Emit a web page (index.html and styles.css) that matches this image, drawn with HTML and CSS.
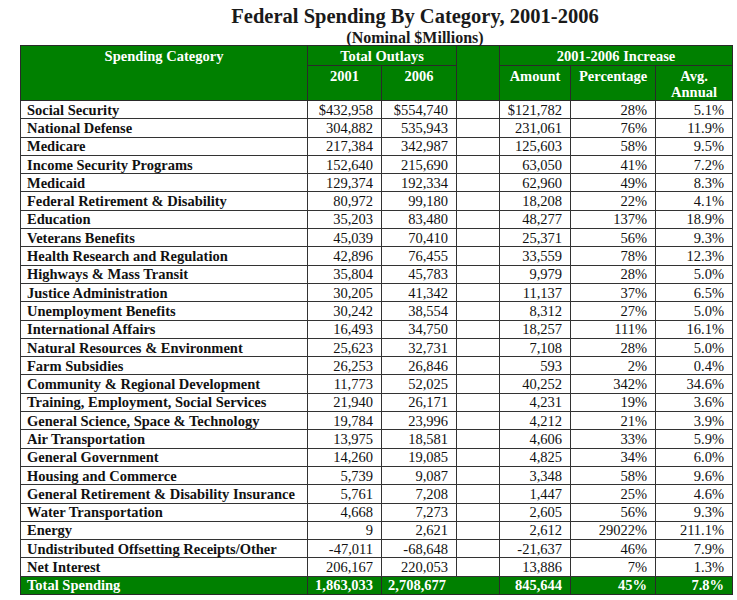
FILE: index.html
```html
<!DOCTYPE html>
<html lang="en">
<head>
<meta charset="utf-8">
<title>Federal Spending By Category, 2001-2006</title>
<link rel="stylesheet" href="styles.css">
</head>
<body>
<div class="page">
  <h1 class="title">Federal Spending By Category, 2001-2006</h1>
  <p class="subtitle">(Nominal $Millions)</p>
  <table class="spend">
    <colgroup>
      <col class="c-cat"><col class="c-y1"><col class="c-y2"><col class="c-gap"><col class="c-amt"><col class="c-pct"><col class="c-avg">
    </colgroup>
    <thead>
      <tr class="h1">
        <th rowspan="2" class="top">Spending Category</th>
        <th colspan="2">Total Outlays</th>
        <th rowspan="2"></th>
        <th colspan="3">2001-2006 Increase</th>
      </tr>
      <tr class="h2">
        <th>2001</th>
        <th>2006</th>
        <th>Amount</th>
        <th>Percentage</th>
        <th>Avg.<br>Annual</th>
      </tr>
    </thead>
    <tbody>
      <tr><td>Social Security</td><td>$432,958</td><td>$554,740</td><td></td><td>$121,782</td><td>28%</td><td>5.1%</td></tr>
      <tr><td>National Defense</td><td>304,882</td><td>535,943</td><td></td><td>231,061</td><td>76%</td><td>11.9%</td></tr>
      <tr><td>Medicare</td><td>217,384</td><td>342,987</td><td></td><td>125,603</td><td>58%</td><td>9.5%</td></tr>
      <tr><td>Income Security Programs</td><td>152,640</td><td>215,690</td><td></td><td>63,050</td><td>41%</td><td>7.2%</td></tr>
      <tr><td>Medicaid</td><td>129,374</td><td>192,334</td><td></td><td>62,960</td><td>49%</td><td>8.3%</td></tr>
      <tr><td>Federal Retirement &amp; Disability</td><td>80,972</td><td>99,180</td><td></td><td>18,208</td><td>22%</td><td>4.1%</td></tr>
      <tr><td>Education</td><td>35,203</td><td>83,480</td><td></td><td>48,277</td><td>137%</td><td>18.9%</td></tr>
      <tr><td>Veterans Benefits</td><td>45,039</td><td>70,410</td><td></td><td>25,371</td><td>56%</td><td>9.3%</td></tr>
      <tr><td>Health Research and Regulation</td><td>42,896</td><td>76,455</td><td></td><td>33,559</td><td>78%</td><td>12.3%</td></tr>
      <tr><td>Highways &amp; Mass Transit</td><td>35,804</td><td>45,783</td><td></td><td>9,979</td><td>28%</td><td>5.0%</td></tr>
      <tr><td>Justice Administration</td><td>30,205</td><td>41,342</td><td></td><td>11,137</td><td>37%</td><td>6.5%</td></tr>
      <tr><td>Unemployment Benefits</td><td>30,242</td><td>38,554</td><td></td><td>8,312</td><td>27%</td><td>5.0%</td></tr>
      <tr><td>International Affairs</td><td>16,493</td><td>34,750</td><td></td><td>18,257</td><td>111%</td><td>16.1%</td></tr>
      <tr><td>Natural Resources &amp; Environment</td><td>25,623</td><td>32,731</td><td></td><td>7,108</td><td>28%</td><td>5.0%</td></tr>
      <tr><td>Farm Subsidies</td><td>26,253</td><td>26,846</td><td></td><td>593</td><td>2%</td><td>0.4%</td></tr>
      <tr><td>Community &amp; Regional Development</td><td>11,773</td><td>52,025</td><td></td><td>40,252</td><td>342%</td><td>34.6%</td></tr>
      <tr><td>Training, Employment, Social Services</td><td>21,940</td><td>26,171</td><td></td><td>4,231</td><td>19%</td><td>3.6%</td></tr>
      <tr><td>General Science, Space &amp; Technology</td><td>19,784</td><td>23,996</td><td></td><td>4,212</td><td>21%</td><td>3.9%</td></tr>
      <tr><td>Air Transportation</td><td>13,975</td><td>18,581</td><td></td><td>4,606</td><td>33%</td><td>5.9%</td></tr>
      <tr><td>General Government</td><td>14,260</td><td>19,085</td><td></td><td>4,825</td><td>34%</td><td>6.0%</td></tr>
      <tr><td>Housing and Commerce</td><td>5,739</td><td>9,087</td><td></td><td>3,348</td><td>58%</td><td>9.6%</td></tr>
      <tr><td>General Retirement &amp; Disability Insurance</td><td>5,761</td><td>7,208</td><td></td><td>1,447</td><td>25%</td><td>4.6%</td></tr>
      <tr><td>Water Transportation</td><td>4,668</td><td>7,273</td><td></td><td>2,605</td><td>56%</td><td>9.3%</td></tr>
      <tr><td>Energy</td><td>9</td><td>2,621</td><td></td><td>2,612</td><td>29022%</td><td>211.1%</td></tr>
      <tr><td>Undistributed Offsetting Receipts/Other</td><td>-47,011</td><td>-68,648</td><td></td><td>-21,637</td><td>46%</td><td>7.9%</td></tr>
      <tr><td>Net Interest</td><td>206,167</td><td>220,053</td><td></td><td>13,886</td><td>7%</td><td>1.3%</td></tr>
    </tbody>
    <tfoot>
      <tr><td>Total Spending</td><td>1,863,033</td><td colspan="2" class="left">2,708,677</td><td>845,644</td><td>45%</td><td>7.8%</td></tr>
    </tfoot>
  </table>
</div>
</body>
</html>
```

FILE: styles.css
```css
html, body {
  margin: 0;
  padding: 0;
  background: #ffffff;
}

.page {
  padding: 5px 5px 0 20px;
  font-family: "Liberation Serif", "Times New Roman", serif;
  color: #111111;
}

.title {
  margin: 0;
  padding-left: 78px;
  text-align: center;
  font-size: 20.5px;
  line-height: 22px;
  font-weight: bold;
  color: #1a1a1a;
}

.subtitle {
  margin: 4px 0 0;
  padding-left: 78px;
  text-align: center;
  font-size: 16px;
  line-height: 14px;
  font-weight: bold;
  color: #1a1a1a;
}

.spend {
  width: 712px;
  table-layout: fixed;
  border-collapse: collapse;
  font-size: 14.5px;
}

.c-cat { width: 287px; }
.c-y1 { width: 74px; }
.c-y2 { width: 75px; }
.c-gap { width: 43px; }
.c-amt { width: 71px; }
.c-pct { width: 85px; }
.c-avg { width: 77px; }

.spend th {
  background: #008000;
  color: #ffffff;
  font-weight: bold;
  border: 1px solid #2a2a2a;
  padding: 0 2px;
  text-align: center;
  vertical-align: top;
  line-height: 16px;
}

.spend .h1 { height: 20px; }
.spend .h1 th { padding-top: 2px; }
.spend .h2 { height: 34px; }
.spend .h2 th { padding-top: 2px; }

.spend td {
  border: 1px solid #333333;
  padding: 0 8px 0 6px;
  text-align: right;
  white-space: nowrap;
  line-height: 16px;
  vertical-align: middle;
  color: #111111;
}

.spend tbody tr { height: 18.3px; }

.spend td:first-child {
  text-align: left;
  font-weight: bold;
}

.spend tfoot tr { height: 18px; }

.spend tfoot td {
  background: #008000;
  color: #ffffff;
  font-weight: bold;
  border-color: #2a2a2a;
}

.spend tfoot td.left {
  text-align: left;
}
```
